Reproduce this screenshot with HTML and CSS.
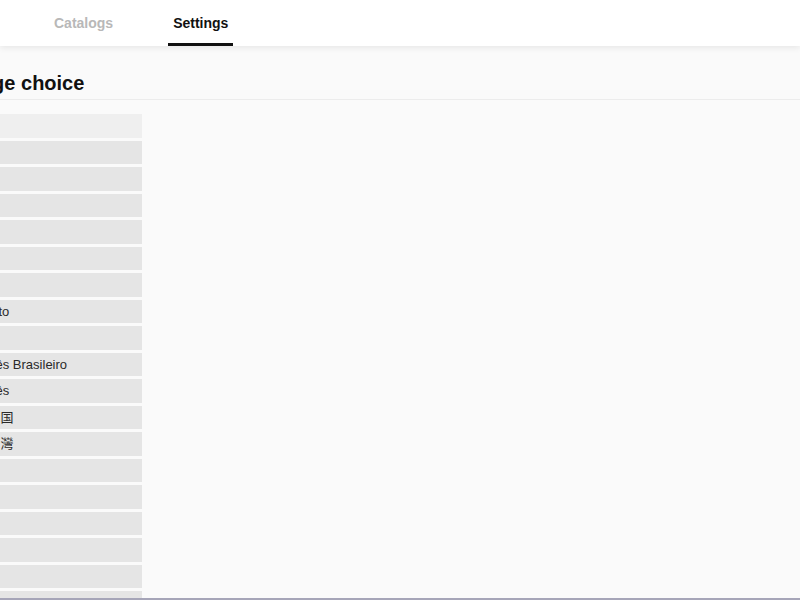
FILE: index.html
```html
<!DOCTYPE html>
<html lang="en">
<head>
    <meta charset="UTF-8">
    <meta name="viewport" content="width=device-width, initial-scale=1.0">
    <title>Settings</title>
    <link rel="stylesheet" href="styles.css">
</head>
<body>
    <div class="topbar">
        <nav class="tabs">
            <a class="tab" href="#catalogs">Catalogs</a>
            <a class="tab active" href="#settings">Settings</a>
        </nav>
    </div>

    <main class="content">
        <div class="section-head">
            <h1 class="section-title">Language choice</h1>
        </div>

        <ul class="lang-list">
            <li class="lang-item current">English</li>
            <li class="lang-item">Deutsch</li>
            <li class="lang-item">Español</li>
            <li class="lang-item">Italiano</li>
            <li class="lang-item">Magyar</li>
            <li class="lang-item">Polski</li>
            <li class="lang-item">Suomi</li>
            <li class="lang-item">Esperanto</li>
            <li class="lang-item">Català</li>
            <li class="lang-item">Português Brasileiro</li>
            <li class="lang-item">Português</li>
            <li class="lang-item" lang="zh-CN">中文 - 中国</li>
            <li class="lang-item hant" lang="zh-TW">中文 - 台灣</li>
            <li class="lang-item">Dansk</li>
            <li class="lang-item">Norsk</li>
            <li class="lang-item">Eesti</li>
            <li class="lang-item">Türkçe</li>
            <li class="lang-item">Gaeilge</li>
            <li class="lang-item">Latina</li>
        </ul>
    </main>

    <div class="scroll-track"></div>
</body>
</html>
```

FILE: styles.css
```css
* {
    margin: 0;
    padding: 0;
    box-sizing: border-box;
}

html, body {
    height: 100%;
}

body {
    font-family: 'Liberation Sans', Arial, 'Noto Sans CJK SC', 'Noto Sans CJK TC', sans-serif;
    color: #222;
    background: #fafafa;
    display: flex;
    flex-direction: column;
    overflow: hidden;
}

/* Top navigation */
.topbar {
    flex: 0 0 46px;
    background: #fff;
    box-shadow: 0 2px 6px rgba(0, 0, 0, 0.08);
    position: relative;
    z-index: 1;
}

.tabs {
    display: flex;
    gap: 50px;
    height: 100%;
    padding-left: 49px;
}

.tab {
    display: flex;
    align-items: center;
    padding: 3px 5px 0;
    font-size: 14px;
    font-weight: bold;
    color: #b8b8b8;
    text-decoration: none;
    border-bottom: 3px solid transparent;
}

.tab.active {
    color: #111;
    border-bottom-color: #111;
}

/* Settings content (scrolled sideways) */
.content {
    flex: 1;
    overflow: hidden;
}

.section-head {
    padding: 25px 0 4px;
    border-bottom: 1px solid #ececec;
}

.section-title {
    margin-left: -79px;
    font-size: 20px;
    line-height: 24px;
    font-weight: bold;
    color: #111;
    white-space: nowrap;
}

.lang-list {
    list-style: none;
    margin: 14px 0 0 -58px;
    width: 200px;
    display: flex;
    flex-direction: column;
    gap: 3px;
}

.lang-item {
    height: 23.5px;
    line-height: 23.5px;
    padding-left: 8px;
    font-size: 13px;
    color: #2a2a2a;
    background: #e5e5e5;
    white-space: nowrap;
}

.lang-item.hant {
    font-family: 'Liberation Sans', Arial, 'Noto Sans CJK TC', sans-serif;
}

.lang-item.current {
    background: #efefef;
}

.scroll-track {
    flex: 0 0 2px;
    background: #a6a5b8;
}
```
